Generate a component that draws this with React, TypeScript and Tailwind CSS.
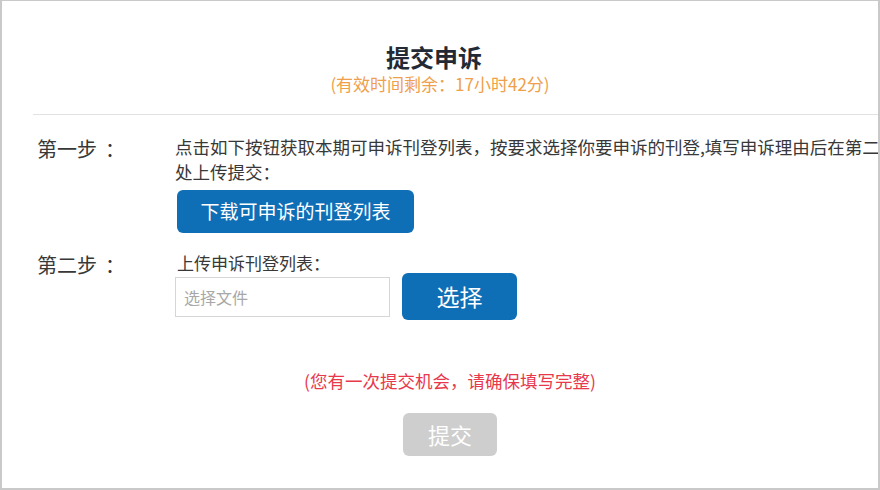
import React from 'react';

const font = { fontFamily: '"Noto Sans CJK SC", "Liberation Sans", sans-serif' };

const App: React.FC = () => {
  return (
    <div className="w-[880px] h-[490px] bg-white" style={font}>
      <div className="w-[880px] h-[490px] border-l-2 border-r-2 border-t border-b-2 border-[#c9c9c9] overflow-hidden bg-white">
        {/* Header */}
        <div className="pt-[41px] flex flex-col items-center">
          <h1 className="pr-3 text-[24px] leading-[30px] font-bold text-[#232a35]">提交申诉</h1>
          <p className="mt-[2px] text-[17px] leading-[20px] text-[#efa04a]">(有效时间剩余：17小时42分)</p>
        </div>
        <div className="mt-[20px] ml-[31px] h-px bg-[#e2e2e2]" />

        {/* Step 1 */}
        <div className="mt-[19px] pl-[35px] flex">
          <div className="w-[138px] shrink-0 mt-[3px] text-[20px] leading-[24px] text-[#383838]">
            第一步<span className="ml-[8px]">：</span>
          </div>
          <div className="flex flex-col items-start">
            <p className="text-[17.5px] leading-[25px] text-[#383838] whitespace-nowrap">
              点击如下按钮获取本期可申诉刊登列表，按要求选择你要申诉的刊登,填写申诉理由后在第二步
              <br />
              处上传提交：
            </p>
            <button className="mt-[6px] ml-[2px] w-[237px] h-[43px] rounded-[6px] bg-[#0f6fb6] text-white text-[19px]">
              下载可申诉的刊登列表
            </button>
          </div>
        </div>

        {/* Step 2 */}
        <div className="mt-[20px] pl-[35px] flex">
          <div className="w-[138px] shrink-0 text-[20px] leading-[24px] text-[#383838]">
            第二步<span className="ml-[8px]">：</span>
          </div>
          <div className="flex flex-col items-start">
            <p className="ml-[2px] text-[17px] leading-[20px] text-[#383838]">上传申诉刊登列表：</p>
            <div className="flex items-center gap-3">
              <input
                readOnly
                placeholder="选择文件"
                className="w-[215px] h-[40px] border border-[#d6d6d6] px-[8px] text-[16px] text-[#333] placeholder:text-[#a8a8a8] outline-none"
                style={font}
              />
              <button className="w-[115px] h-[47px] rounded-[6px] bg-[#0f6fb6] text-white text-[23px]">选择</button>
            </div>
          </div>
        </div>

        {/* Notice + submit */}
        <div className="mt-[51px] pl-[20px] flex flex-col items-center">
          <p className="text-[17.5px] leading-[20px] text-[#e8384c]">(您有一次提交机会，请确保填写完整)</p>
          <button className="mt-[22px] w-[94px] h-[43px] rounded-[6px] bg-[#cecece] text-white text-[22px]">提交</button>
        </div>
      </div>
    </div>
  );
};

export default App;
